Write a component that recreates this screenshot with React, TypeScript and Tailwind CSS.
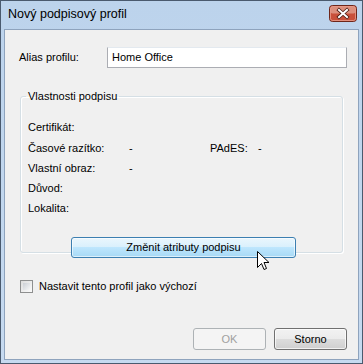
import React from "react";

const font = { fontFamily: '"Liberation Sans", Arial, sans-serif' };

function Cursor() {
  return (
    <svg width="13" height="21" viewBox="0 0 13 21" className="absolute left-[256px] top-[250px]">
      <path d="M0.5 0.5 L0.5 16.5 L4.5 12.5 L7 18.5 L9.5 17.5 L7 11.5 L12 11.5 Z" fill="#ffffff" stroke="#000000" strokeWidth="1" strokeLinejoin="miter" />
    </svg>
  );
}

function CloseButton() {
  return (
    <svg width="28" height="17" viewBox="0 0 28 17" className="block shrink-0">
      <rect x="0.5" y="0.5" width="27" height="16" rx="3" fill="#c9503a" stroke="#6e261a" />
      <rect x="1.5" y="1.5" width="25" height="7" rx="2" fill="#dc8f7d" />
      <rect x="1.5" y="1.5" width="25" height="14" rx="2" fill="none" stroke="#eeaa9a" strokeOpacity="0.7" />
      <path d="M10 5 L18 12 M18 5 L10 12" stroke="#4a1a10" strokeWidth="3.6" strokeLinecap="square" />
      <path d="M10 5 L18 12 M18 5 L10 12" stroke="#ffffff" strokeWidth="2" strokeLinecap="square" />
    </svg>
  );
}

export default function App() {
  return (
    <div className="relative w-[363px] h-[364px] overflow-hidden bg-gradient-to-b from-[#bcd3ec] to-[#c6daf0] border border-[#4a5a6e] flex flex-col text-[11px] text-black" style={font}>
      <div className="h-[28px] flex items-start justify-between pl-[7px] pr-[5px] pt-[4px] shrink-0">
        <span className="text-[12.5px] leading-[18px] text-black">Nový podpisový profil</span>
        <CloseButton />
      </div>
      <div className="flex-1 mx-[3px] mb-[3px] bg-[#f0f0f0] border border-[#8ea3bd] flex flex-col">
        <div className="flex items-center pl-[14px] pt-[17px]">
          <span className="w-[88px]">Alias profilu:</span>
          <div className="w-[240px] h-[21px] bg-white border border-[#abadb3] border-t-[#e3e9ef] flex items-center pl-[4px]">
            Home Office
          </div>
        </div>
        <fieldset className="mx-[15px] mt-[20px] h-[165px] border border-[#d5dfe5] rounded-[3px] pl-[7px] pt-0 shadow-[inset_1px_1px_0_#ffffff,1px_1px_0_#ffffff]">
          <legend className="ml-[-2px] px-[2px]">Vlastnosti podpisu</legend>
          <div className="flex flex-col mt-[13px]">
            <div className="h-[20px] flex items-center">Certifikát:</div>
            <div className="h-[21px] flex items-center">
              <span className="w-[101px]">Časové razítko:</span>
              <span className="w-[81px]">-</span>
              <span className="w-[48px]">PAdES:</span>
              <span>-</span>
            </div>
            <div className="h-[20px] flex items-center">
              <span className="w-[101px]">Vlastní obraz:</span>
              <span>-</span>
            </div>
            <div className="h-[20px] flex items-center">Důvod:</div>
            <div className="h-[20px] flex items-center">Lokalita:</div>
          </div>
          <div className="mt-[18px] ml-[43px] w-[225px] h-[21px] rounded-[3px] border border-[#3c7fb1] bg-[linear-gradient(to_bottom,#eaf6fd_0%,#d9f0fc_50%,#bee6fd_50%,#a7d9f5_100%)] shadow-[inset_0_0_0_1px_rgba(255,255,255,0.6)] flex items-center justify-center">
            Změnit atributy podpisu
          </div>
        </fieldset>
        <div className="flex items-center pl-[15px] mt-[25px]">
          <div className="w-[13px] h-[13px] border border-[#8e8f8f] bg-[linear-gradient(135deg,#dcdcdc,#fbfbfb)] p-[2px]">
            <div className="w-full h-full bg-[linear-gradient(135deg,#cbcfd5,#f6f6f6)]"></div>
          </div>
          <span className="ml-[6px]">Nastavit tento profil jako výchozí</span>
        </div>
        <div className="flex-1"></div>
        <div className="flex justify-end gap-[8px] pr-[11px] pb-[9px]">
          <div className="w-[73px] h-[22px] rounded-[3px] border border-[#adb2b5] bg-[#f4f4f4] text-[#a0a0a0] flex items-center justify-center">OK</div>
          <div className="w-[73px] h-[22px] rounded-[3px] border border-[#707070] bg-[linear-gradient(to_bottom,#f2f2f2_0%,#ebebeb_50%,#dddddd_50%,#cfcfcf_100%)] shadow-[inset_0_0_0_1px_rgba(255,255,255,0.7)] flex items-center justify-center">Storno</div>
        </div>
      </div>
      <Cursor />
    </div>
  );
}
